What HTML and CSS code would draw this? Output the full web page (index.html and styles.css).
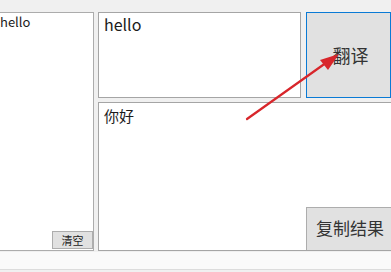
FILE: index.html
```html
<!DOCTYPE html>
<html lang="zh">
<head>
  <meta charset="UTF-8">
  <title>翻译</title>
  <link rel="stylesheet" href="styles.css">
</head>
<body>
  <div class="window">
    <div class="history">
      <div class="history-text">hello</div>
      <button class="clear-btn">清空</button>
    </div>
    <div class="main">
      <div class="top-row">
        <div class="source">hello</div>
        <button class="translate-btn">翻译</button>
      </div>
      <div class="result">
        <div class="result-text">你好</div>
        <button class="copy-btn">复制结果</button>
      </div>
    </div>
  </div>
  <div class="status"></div>
  <!-- 标注箭头 -->
  <svg class="arrow" width="391" height="272" viewBox="0 0 391 272">
    <line x1="247" y1="119" x2="330" y2="60" stroke="#d8262b" stroke-width="2.2" stroke-linecap="round"/>
    <polygon points="339,54 320,60 328,70" fill="#d8262b"/>
  </svg>
</body>
</html>
```

FILE: styles.css
```css
body { margin:0; background:#f0f0f0; font-family:"Noto Sans CJK SC", "Noto Sans", sans-serif; color:#1b1b1b; width:391px; height:272px; overflow:hidden; position:relative; }
.window { display:flex; gap:4px; padding-top:12px; height:239px; }
.history { width:93px; flex:none; background:#fff; border:1px solid #acacac; border-left:none; position:relative; }
.history-text { font-size:13px; line-height:16px; padding:1px 0 0 0; }
.clear-btn { position:absolute; right:0; bottom:1px; width:41px; height:18px; padding:0; background:#e1e1e1; border:1px solid #adadad; font-family:inherit; font-size:11px; line-height:14px; color:#222; }
.main { flex:1; display:flex; flex-direction:column; gap:4px; }
.top-row { display:flex; gap:5px; height:86px; }
.source { background:#fff; border:1px solid #a5a5a5; font-size:16px; line-height:20px; padding:1px 5px; box-sizing:border-box; width:203px; }
.translate-btn { width:85px; background:#e1e1e1; border:1px solid #0a7ad5; font-family:inherit; font-size:18px; color:#333; padding:0 0 0 4px; }
.result { flex:1; background:#fff; border:1px solid #a5a5a5; border-right:none; position:relative; }
.result-text { font-size:15px; line-height:18px; padding:4px 5px; }
.copy-btn { position:absolute; right:0; bottom:0; width:85px; height:43px; background:#e1e1e1; border:1px solid #adadad; border-right:none; border-bottom:none; font-family:inherit; font-size:17px; color:#333; padding:0 0 4px 2px; }
.status { margin-top:1px; height:17px; background:#fafafa; border-bottom:1px solid #dcdcdc; }
.arrow { position:absolute; left:0; top:0; pointer-events:none; }
```
